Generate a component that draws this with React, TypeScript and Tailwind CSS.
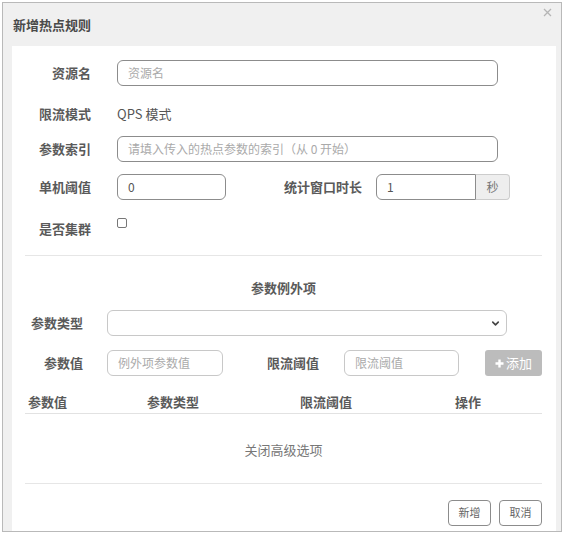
import { ChevronDown } from "lucide-react";

const font = { fontFamily: '"Noto Sans CJK SC", "Noto Sans", sans-serif' };

function Label({ text, w }: { text: string; w: string }) {
  return <div className={`${w} shrink-0 text-right text-[13px] font-bold text-[#5a5a5a]`}>{text}</div>;
}

export default function App() {
  return (
    <div className="w-[566px] h-[535px] bg-white" style={font}>
      <div className="absolute left-[2px] top-[2px] w-[560px] h-[530px] border border-[#b9b9b9] bg-[#f0f0f0] flex flex-col">
        {/* Header */}
        <div className="h-[43px] shrink-0 flex items-center pl-[10px] text-[13px] font-bold text-[#4a4a4a]">
          新增热点规则
        </div>
        <svg className="absolute right-[9px] top-[5px]" width="9" height="9" viewBox="0 0 9 9">
          <path d="M1 1 L8 8 M8 1 L1 8" stroke="#b5b5b5" strokeWidth="1.3" />
        </svg>

        {/* Body */}
        <div className="flex-1 ml-[9px] mr-[5px] bg-white pl-[13px] pr-[14px] text-[#555]">
          {/* 资源名 */}
          <div className="mt-[14px] h-[26px] flex items-center">
            <Label text="资源名" w="w-[66px]" />
            <div className="ml-[26px] w-[381px] h-[26px] border border-[#8c8c8c] rounded-[6px] flex items-center pl-[10px] text-[12px] text-[#aaa]">
              资源名
            </div>
          </div>
          {/* 限流模式 */}
          <div className="mt-[15px] h-[26px] flex items-center">
            <Label text="限流模式" w="w-[66px]" />
            <div className="ml-[26px] text-[13px] text-[#555]">QPS 模式</div>
          </div>
          {/* 参数索引 */}
          <div className="mt-[9px] h-[26px] flex items-center">
            <Label text="参数索引" w="w-[66px]" />
            <div className="ml-[26px] w-[381px] h-[26px] border border-[#8c8c8c] rounded-[6px] flex items-center pl-[10px] text-[12px] text-[#aaa]">
              请填入传入的热点参数的索引（从 0 开始）
            </div>
          </div>
          {/* 单机阈值 / 统计窗口时长 */}
          <div className="mt-[12px] h-[26px] flex items-center">
            <Label text="单机阈值" w="w-[66px]" />
            <div className="ml-[26px] w-[109px] h-[26px] border border-[#8c8c8c] rounded-[6px] flex items-center pl-[10px] text-[12px] text-[#555]">
              0
            </div>
            <div className="ml-[58px] text-[13px] font-bold text-[#5a5a5a]">统计窗口时长</div>
            <div className="ml-[14px] flex h-[26px]">
              <div className="w-[100px] border border-[#8c8c8c] rounded-l-[6px] flex items-center pl-[10px] text-[12px] text-[#555]">
                1
              </div>
              <div className="w-[34px] border border-l-0 border-[#ccc] rounded-r-[4px] bg-[#eee] flex items-center justify-center text-[12px] text-[#777]">
                秒
              </div>
            </div>
          </div>
          {/* 是否集群 */}
          <div className="mt-[12px] flex items-start">
            <div className="pt-[7px]">
              <Label text="是否集群" w="w-[66px]" />
            </div>
            <div className="ml-[26px] mt-[6px] w-[10px] h-[10px] border border-[#777] rounded-[2px]" />
          </div>

          <div className="mt-[16px] border-t border-[#e6e6e6]" />

          <div className="mt-[22px] text-center text-[13px] font-bold text-[#5a5a5a]">参数例外项</div>

          {/* 参数类型 */}
          <div className="mt-[13px] h-[26px] flex items-center">
            <Label text="参数类型" w="w-[58px]" />
            <div className="ml-[24px] w-[400px] h-[26px] border border-[#c8c8c8] rounded-[6px] flex items-center justify-end pr-[5px]">
              <ChevronDown className="w-[11px] h-[11px] text-[#444]" strokeWidth={3.5} />
            </div>
          </div>

          {/* 参数值 / 限流阈值 */}
          <div className="mt-[14px] h-[26px] flex items-center">
            <Label text="参数值" w="w-[58px]" />
            <div className="ml-[24px] w-[116px] h-[26px] border border-[#c8c8c8] rounded-[6px] flex items-center pl-[10px] text-[12px] text-[#aaa]">
              例外项参数值
            </div>
            <div className="ml-[44px] text-[13px] font-bold text-[#5a5a5a]">限流阈值</div>
            <div className="ml-[25px] w-[115px] h-[26px] border border-[#c8c8c8] rounded-[6px] flex items-center pl-[10px] text-[12px] text-[#aaa]">
              限流阈值
            </div>
            <div className="ml-[26px] w-[57px] h-[26px] rounded-[3px] bg-[#bcbcbc] flex items-center justify-center gap-[2px] text-[13px] text-white">
              <svg width="9" height="9" viewBox="0 0 9 9">
                <path d="M4.5 0.5 V8.5 M0.5 4.5 H8.5" stroke="#fff" strokeWidth="2.4" />
              </svg>
              添加
            </div>
          </div>

          {/* Table header */}
          <div className="mt-[16px] flex text-[13px] font-bold text-[#5a5a5a] pb-[1px] border-b border-[#e2e2e2]">
            <div className="w-[122px] pl-[3px]">参数值</div>
            <div className="w-[153px]">参数类型</div>
            <div className="w-[155px]">限流阈值</div>
            <div>操作</div>
          </div>

          <div className="h-[70px] pt-[4px] flex items-center justify-center text-[13px] text-[#777] border-b border-[#e6e6e6]">
            关闭高级选项
          </div>

          <div className="mt-[16px] flex justify-end gap-[8px]">
            <div className="w-[43px] h-[26px] border border-[#8c8c8c] rounded-[4px] flex items-center justify-center text-[11px] text-[#666]">
              新增
            </div>
            <div className="w-[43px] h-[26px] border border-[#8c8c8c] rounded-[4px] flex items-center justify-center text-[11px] text-[#666]">
              取消
            </div>
          </div>
        </div>
      </div>
    </div>
  );
}
